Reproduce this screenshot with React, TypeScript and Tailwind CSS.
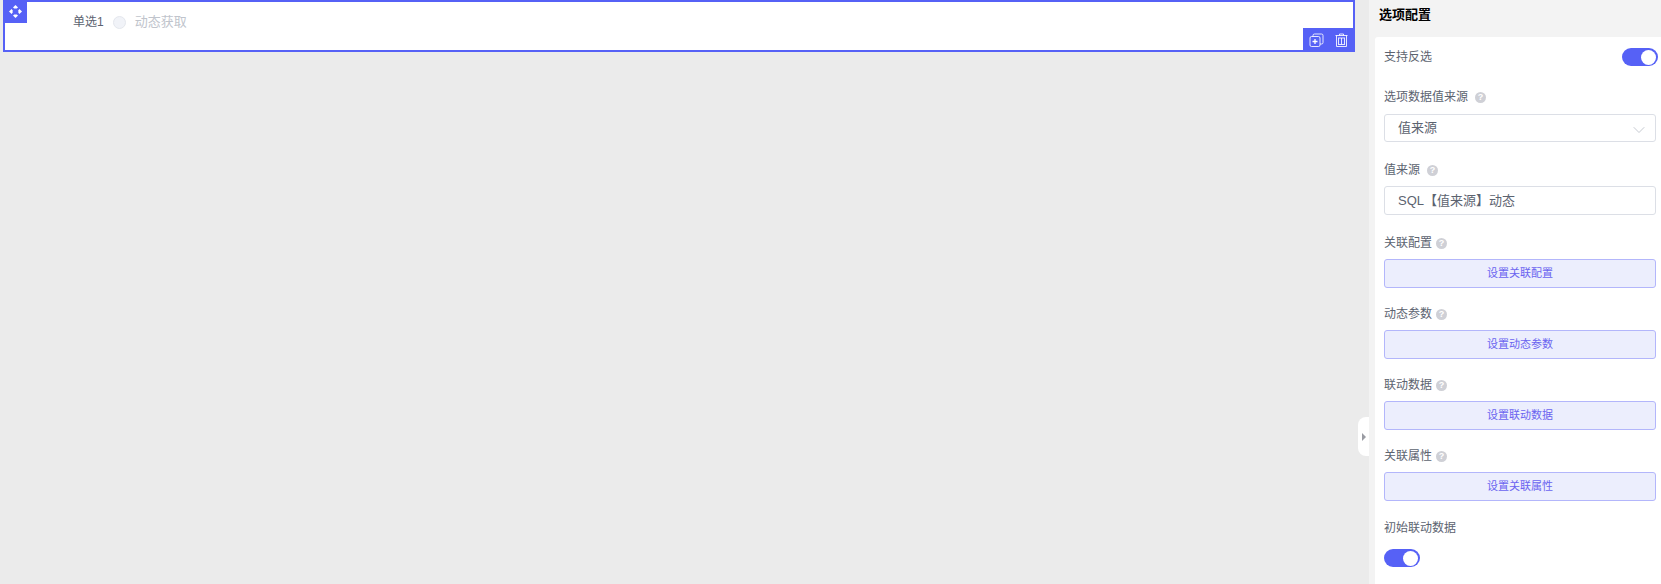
import { ChevronDown } from "lucide-react";

const FONT = "font-['Liberation_Sans','Noto_Sans_CJK_SC',sans-serif]";

function Switch() {
  return (
    <span className="flex h-[18px] w-[36px] items-center justify-end rounded-full bg-[#5661f6] pr-[2px]">
      <span className="h-[15px] w-[15px] rounded-full bg-white" />
    </span>
  );
}

function FieldLabel({ text, gap }: { text: string; gap: string }) {
  return (
    <div className="flex h-[16px] items-center text-[12px] leading-[16px] text-[#5c6370]">
      <span>{text}</span>
      <span className={`${gap} flex h-[11px] w-[11px] items-center justify-center rounded-full bg-[#cfd0d6] text-[9px] font-bold leading-none text-white`}>
        ?
      </span>
    </div>
  );
}

function ConfigButton({ label, text, top }: { label: string; text: string; top: string }) {
  return (
    <div className={top}>
      <FieldLabel text={label} gap="ml-[4px]" />
      <button className="mt-[8px] flex h-[29px] w-full items-center justify-center rounded-[3px] border border-[#b3b6fb] bg-[#eceefd] text-[11px] text-[#6a63f0]">
        {text}
      </button>
    </div>
  );
}

export default function App() {
  return (
    <div className={`flex h-[584px] w-[1661px] overflow-hidden bg-[#ebebeb] ${FONT}`}>
      <main className="relative min-w-0 flex-1 pl-[3px] pr-[14px]">
        <div className="relative h-[52px] border-2 border-[#5661f6] bg-white">
          <div className="absolute -left-[2px] -top-[2px] flex h-[23px] w-[24px] items-center justify-center bg-[#5661f6]">
            <svg width="15" height="15" viewBox="0 0 15 15" fill="white">
              <path d="M7.500 1 10 3.600 8.800 4.600H6.200L5 3.600Z" />
              <path d="M7.500 14 10 11.400 8.800 10.400H6.200L5 11.400Z" />
              <path d="M1 7.500 3.600 5 4.600 6.200V8.800L3.600 10Z" />
              <path d="M14 7.500 11.400 5 10.400 6.200V8.800L11.400 10Z" />
            </svg>
          </div>
          <div className="flex h-[40px] items-center pl-[68px]">
            <span className="text-[12px] text-[#5c6370]">单选1</span>
            <span className="ml-[9px] h-[13px] w-[13px] rounded-full border border-[#e4e7ed] bg-[#f1f3f8]" />
            <span className="ml-[9px] text-[13px] text-[#c0c4cc]">动态获取</span>
          </div>
          <div className="absolute -bottom-[2px] -right-[2px] flex h-[24px] w-[52px] items-center justify-center gap-[11px] bg-[#5661f6] pr-[1px]">
            <svg width="15" height="15" viewBox="0 0 15 15" fill="none" stroke="white" strokeOpacity="0.85" strokeWidth="1">
              <rect x="1" y="3.500" width="10" height="10" rx="1.500" />
              <path d="M4 3.500V2.500a1.500 1.500 0 0 1 1.500-1.500h7A1.500 1.500 0 0 1 14 2.500v7a1.500 1.500 0 0 1-1.500 1.500H11" />
              <path d="M6 6v5M3.500 8.500h5" strokeWidth="1.300" strokeOpacity="1" />
            </svg>
            <svg width="13" height="15" viewBox="0 0 13 15" fill="none" stroke="white" strokeOpacity="0.85" strokeWidth="1">
              <path d="M0.500 2.500h12M4.500 2.500V1h4v1.500M1.500 2.500v11h10v-11" />
              <rect x="3.500" y="5" width="6" height="6.500" />
              <path d="M6.500 5v6.500" />
            </svg>
          </div>
        </div>
        <div className="absolute right-0 top-[417px] flex h-[39px] w-[11px] items-center justify-center rounded-l-[8px] bg-white">
          <span className="h-0 w-0 border-y-[4px] border-l-[4px] border-y-transparent border-l-[#9a9ca3]" />
        </div>
      </main>

      <aside className="flex w-[292px] shrink-0 flex-col bg-[#f3f3f3]">
        <div className="flex h-[37px] shrink-0 items-start pl-[10px] pt-[7px] text-[13px] font-bold leading-[16px] text-black">
          选项配置
        </div>
        <div className="ml-[6px] flex-1 rounded-tl-[3px] bg-white pl-[9px] pr-[5px]">
          <div className="mt-[11px] flex h-[18px] items-center justify-between text-[12px] text-[#5c6370]">
            <span>支持反选</span>
            <span className="mr-[-2px]">
              <Switch />
            </span>
          </div>

          <div className="mt-[23px]">
            <FieldLabel text="选项数据值来源" gap="ml-[7px]" />
            <div className="mt-[9px] flex h-[28px] items-center justify-between rounded-[3px] border border-[#dcdfe6] bg-white pl-[13px] pr-[6px] text-[13px] text-[#5c6370]">
              <span>值来源</span>
              <ChevronDown size={20} strokeWidth={1.1} color="#c0c4cc" className="mt-[4px]" />
            </div>
          </div>

          <div className="mt-[20px]">
            <FieldLabel text="值来源" gap="ml-[7px]" />
            <div className="mt-[8px] flex h-[29px] items-center rounded-[3px] border border-[#dcdfe6] bg-white pl-[13px] text-[13px] text-[#5c6370]">
              SQL【值来源】动态
            </div>
          </div>

          <ConfigButton label="关联配置" text="设置关联配置" top="mt-[20px]" />
          <ConfigButton label="动态参数" text="设置动态参数" top="mt-[18px]" />
          <ConfigButton label="联动数据" text="设置联动数据" top="mt-[18px]" />
          <ConfigButton label="关联属性" text="设置关联属性" top="mt-[18px]" />

          <div className="mt-[19px] h-[16px] text-[12px] leading-[16px] text-[#5c6370]">初始联动数据</div>
          <div className="mt-[13px]">
            <Switch />
          </div>
        </div>
      </aside>
    </div>
  );
}
